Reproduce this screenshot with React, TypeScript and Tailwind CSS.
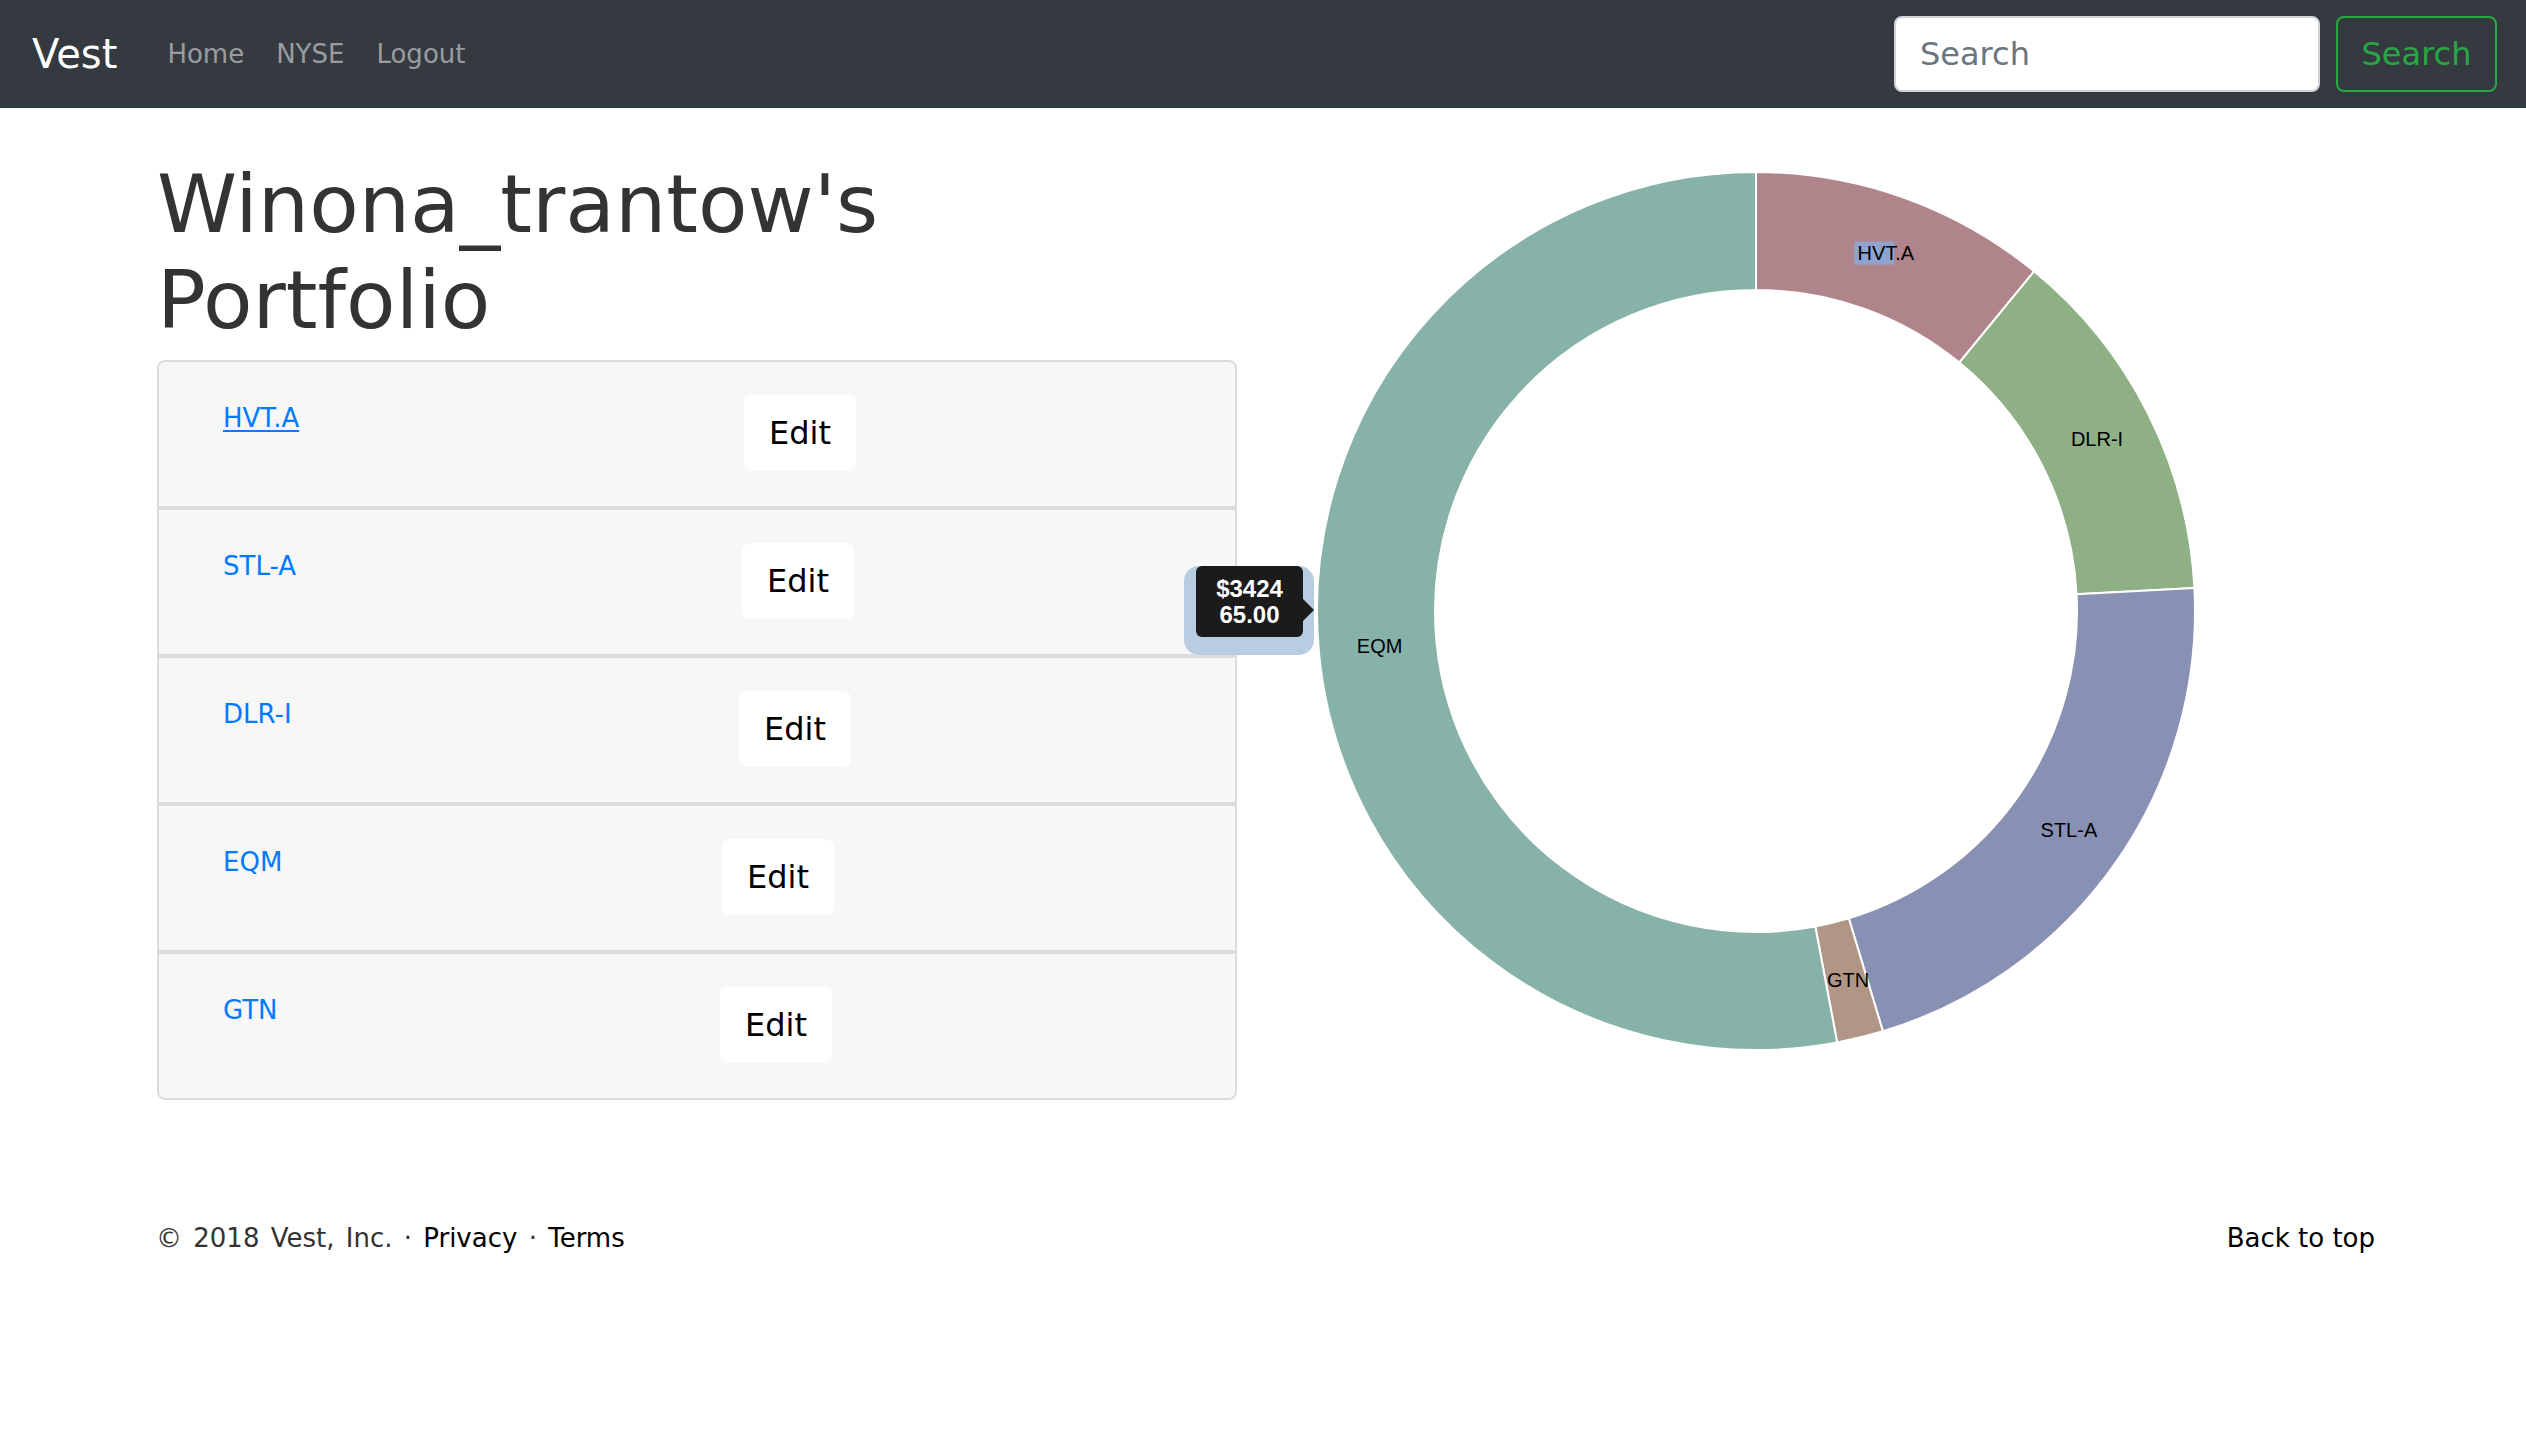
import React from "react";

const NAV_LINKS = ["Home", "NYSE", "Logout"];

// text column widths put each Edit button where the reference has it
const HOLDINGS = [
  { sym: "HVT.A", col: "w-[521px]", hover: true },
  { sym: "STL-A", col: "w-[519px]", hover: false },
  { sym: "DLR-I", col: "w-[516px]", hover: false },
  { sym: "EQM", col: "w-[499px]", hover: false },
  { sym: "GTN", col: "w-[497px]", hover: false },
];

const SLICES = [
  { label: "HVT.A", from: 0, to: 39.3, color: "#b0848b" },
  { label: "DLR-I", from: 39.3, to: 87, color: "#8fb085" },
  { label: "STL-A", from: 87, to: 163.2, color: "#8890b3" },
  { label: "GTN", from: 163.2, to: 169.35, color: "#b19585" },
  { label: "EQM", from: 169.35, to: 360, color: "#87b2a8" },
];

const CX = 465;
const CY = 455;
const R_OUT = 439;
const R_IN = 321;

function pt(deg: number, r: number): [number, number] {
  const a = (deg * Math.PI) / 180;
  return [CX + r * Math.sin(a), CY - r * Math.cos(a)];
}

function arcPath(from: number, to: number) {
  const large = to - from > 180 ? 1 : 0;
  const [x0, y0] = pt(from, R_OUT);
  const [x1, y1] = pt(to, R_OUT);
  const [x2, y2] = pt(to, R_IN);
  const [x3, y3] = pt(from, R_IN);
  return `M${x0},${y0} A${R_OUT},${R_OUT} 0 ${large} 1 ${x1},${y1} L${x2},${y2} A${R_IN},${R_IN} 0 ${large} 0 ${x3},${y3} Z`;
}

function Donut() {
  return (
    <svg width={930} height={910} viewBox="0 0 930 910" className="ml-[54px] shrink-0">
      {SLICES.map((s) => (
        <path key={s.label} d={arcPath(s.from, s.to)} fill={s.color} stroke="#fff" strokeWidth={2} />
      ))}
      {SLICES.map((s) => {
        const [x, y] = pt((s.from + s.to) / 2, (R_IN + R_OUT) / 2);
        return (
          <g key={s.label}>
            {s.label === "HVT.A" && <rect x={x - 29.5} y={y - 11.5} width={40} height={23} fill="#8ea3cf" />}
            <text
              x={x + 2}
              y={y}
              dy="0.35em"
              textAnchor="middle"
              fontSize={20}
              fill="#000"
              fontFamily="'Liberation Sans', Arial, sans-serif"
            >
              {s.label}
            </text>
          </g>
        );
      })}
    </svg>
  );
}

export default function App() {
  return (
    <div className="min-h-[1452px] bg-white font-['DejaVu_Sans',Verdana,sans-serif]">
      <nav className="flex h-[108px] items-center justify-between bg-[#343a40] pl-[32px] pr-[29px]">
        <div className="flex items-center">
          <a href="#" className="mr-[34px] text-[40px] leading-[60px] text-white">
            Vest
          </a>
          <ul className="flex">
            {NAV_LINKS.map((l) => (
              <li key={l}>
                <a href="#" className="block px-[16px] text-[26px] leading-[39px] text-[#9a9da0]">
                  {l}
                </a>
              </li>
            ))}
          </ul>
        </div>
        <form className="flex items-center" onSubmit={(e) => e.preventDefault()}>
          <input
            type="text"
            placeholder="Search"
            className="h-[76px] w-[426px] rounded-[8px] border-2 border-[#ced4da] bg-white px-[24px] text-[32px] text-[#495057] outline-none placeholder:text-[#6c757d]"
          />
          <button
            type="submit"
            className="ml-[16px] h-[76px] w-[161px] rounded-[8px] border-2 border-[#28a745] text-[32px] text-[#28a745]"
          >
            Search
          </button>
        </form>
      </nav>

      <main className="relative flex items-start pl-[157px] pt-[48px]">
        <div className="w-[1080px] shrink-0">
          <h1 className="mb-[12px] text-[81px] font-normal leading-[96px] text-[#333]">
            Winona_trantow's
            <br />
            Portfolio
          </h1>
          <div>
            {HOLDINGS.map((h, i) => (
              <div
                key={h.sym}
                className={
                  "flex items-start border-2 border-[#dcdcdc] bg-[#f7f7f7] pb-[35px] pl-[64px] pt-[33px] " +
                  (i === 0 ? "rounded-t-[8px]" : i === HOLDINGS.length - 1 ? "rounded-b-[8px]" : "")
                }
              >
                <div className={h.col + " mt-[4px] shrink-0"}>
                  <a
                    href="#"
                    className={
                      "text-[26px] leading-[39px] text-[#007bff] " +
                      (h.hover ? "underline decoration-2 underline-offset-[3px]" : "")
                    }
                  >
                    {h.sym}
                  </a>
                </div>
                <button className="rounded-[8px] bg-white px-[25px] py-[14px] text-[32px] leading-[48px] text-black">
                  Edit
                </button>
              </div>
            ))}
          </div>
        </div>

        <Donut />

        {/* hover tooltip on the EQM slice */}
        <div className="absolute left-[1184px] top-[458px] h-[89px] w-[130px] rounded-[15px] bg-[#b8cce2]">
          <div className="absolute left-[12px] top-0 h-[71px] w-[107px] rounded-[6px] bg-[#1b1b1b] pt-[10px] text-center font-['Liberation_Sans',Arial,sans-serif] text-[24px] font-bold leading-[26px] text-white">
            $3424
            <br />
            65.00
          </div>
          <div className="absolute left-[119px] top-[33px] h-0 w-0 border-y-[11px] border-l-[11px] border-y-transparent border-l-[#1b1b1b]" />
        </div>
      </main>

      <footer className="mt-[119px] flex justify-between pl-[156px] pr-[151px] text-[26px] leading-[39px]">
        <p className="text-[#333] [word-spacing:3px]">
          © 2018 Vest, Inc. ·{" "}
          <a href="#" className="text-black">
            Privacy
          </a>{" "}
          ·{" "}
          <a href="#" className="text-black">
            Terms
          </a>
        </p>
        <a href="#" className="text-black">
          Back to top
        </a>
      </footer>
    </div>
  );
}
